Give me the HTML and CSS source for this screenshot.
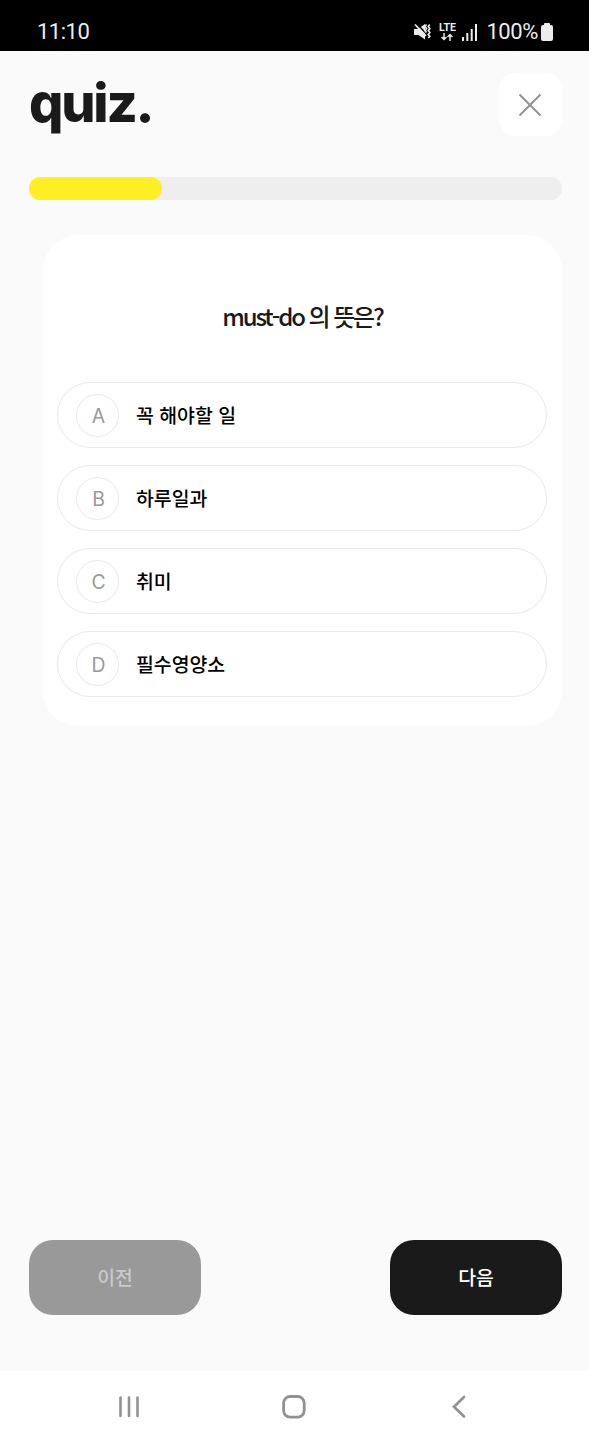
FILE: index.html
```html
<!DOCTYPE html>
<html lang="ko">
<head>
    <meta charset="UTF-8">
    <meta name="viewport" content="width=device-width, initial-scale=1.0">
    <title>quiz.</title>
    <link rel="stylesheet" href="styles.css">
</head>
<body>
    <div class="status-bar">
        <span class="time">11:10</span>
        <div class="status-icons">
            <svg class="mute" width="18" height="18" viewBox="0 0 18 18">
                <path d="M0 6h4L11 1v15.500L4.500 12H0z" fill="#ececec"/>
                <path d="M2 0l12 12.500" stroke="#000" stroke-width="1.500"/>
                <path d="M1 1.500l11 11.500" stroke="#ececec" stroke-width="1.800"/>
                <path d="M12.500 1.500l-1.500 2 1.500 2-1.500 2 1.500 2M15.800 1.500l-1.500 2 1.500 2-1.500 2 1.500 2-1.500 2 1.500 2-1.500 1.500" fill="none" stroke="#ececec" stroke-width="1.700"/>
            </svg>
            <div class="lte">
                <span>LTE</span>
                <svg width="12" height="8" viewBox="0 0 12 8" fill="none" stroke="#ececec" stroke-width="1.500">
                    <path d="M3 0v6.500M.5 4L3 6.500 5.500 4M9 8V1.500M6.500 4L9 1.500 11.500 4"/>
                </svg>
            </div>
            <svg class="signal" width="16" height="17" viewBox="0 0 16 17" fill="#ececec">
                <rect x="0" y="13" width="2" height="4"/>
                <rect x="4.300" y="9" width="2" height="8"/>
                <rect x="8.700" y="5" width="2" height="12"/>
                <rect x="13" y="0" width="2" height="17"/>
            </svg>
            <span class="percent">100%</span>
            <svg class="battery" width="12" height="18" viewBox="0 0 12 18" fill="#ececec">
                <rect x="3" y="0" width="6" height="4" rx="1"/>
                <rect x="0" y="2" width="12" height="16" rx="2"/>
            </svg>
        </div>
    </div>
    <div class="quiz">
        <div class="header">
            <h1>quiz.</h1>
            <button class="close" aria-label="닫기">
                <svg width="24" height="24" viewBox="0 0 24 24">
                    <path d="M1.500 1.500l21 21M22.500 1.500l-21 21" stroke="#929292" stroke-width="2"/>
                </svg>
            </button>
        </div>
        <div class="progress"><div class="progress-now"></div></div>
        <div class="card">
            <p class="question">must-do 의 뜻은?</p>
            <div class="option"><div class="mark">A</div><p>꼭 해야할 일</p></div>
            <div class="option"><div class="mark">B</div><p>하루일과</p></div>
            <div class="option"><div class="mark">C</div><p>취미</p></div>
            <div class="option"><div class="mark">D</div><p>필수영양소</p></div>
        </div>
        <div class="buttons">
            <button class="prev">이전</button>
            <button class="next">다음</button>
        </div>
    </div>
    <div class="nav-bar">
        <svg width="24" height="24" viewBox="0 0 24 24" stroke="#929292" stroke-width="2.600" stroke-linecap="round">
            <path d="M3.500 2.500v18.500M12 2.500v18.500M20.500 2.500v18.500"/>
        </svg>
        <svg width="24" height="24" viewBox="0 0 24 24" fill="none" stroke="#929292" stroke-width="2.800">
            <rect x="1.600" y="1.500" width="20.600" height="20.600" rx="6.500"/>
        </svg>
        <svg width="24" height="24" viewBox="0 0 24 24" fill="none" stroke="#929292" stroke-width="2.700" stroke-linecap="round">
            <path d="M17 2L7 11.700 17 21.500"/>
        </svg>
    </div>
</body>
</html>
```
FILE: styles.css
```css
body, div, p, h1, button{
    margin: 0;
    padding: 0;
}
*{
    box-sizing: border-box;
}
body{
    display: flex;
    flex-direction: column;
    height: 1440px;
    background: #fafafa;
    font-family: "Noto Sans CJK KR", sans-serif;
}
svg{
    display: block;
}
button{
    border: none;
    font-family: inherit;
}
.status-bar{
    display: flex;
    justify-content: space-between;
    height: 51px;
    padding: 20px 36px 0 37px;
    background: #000;
    color: #ececec;
    font-family: Roboto, sans-serif;
    font-size: 22px;
    line-height: 24px;
}
.time{
    letter-spacing: -0.5px;
}
.status-icons{
    display: flex;
}
.mute{
    margin: 3px 6px 0 0;
}
.lte{
    display: flex;
    flex-direction: column;
    align-items: center;
    width: 18px;
    margin-right: 6px;
    font-size: 10.5px;
    font-weight: 700;
    line-height: 10px;
    padding-top: 3px;
}
.signal{
    margin: 4px 8px 0 0;
}
.percent{
    letter-spacing: -0.4px;
}
.battery{
    margin: 3px 0 0 3px;
}
.quiz{
    flex: 1;
    display: flex;
    flex-direction: column;
    padding: 22px 27px 56px 29px;
}
.header{
    display: flex;
    justify-content: space-between;
    height: 63px;
}
h1{
    color: #1a1a1a;
    font-family: Inter, sans-serif;
    font-size: 54px;
    font-weight: 800;
    line-height: 59px;
    letter-spacing: -2.2px;
}
.close{
    display: flex;
    align-items: center;
    justify-content: center;
    width: 63px;
    height: 63px;
    padding-right: 2px;
    background: #fff;
    border-radius: 16px;
}
.progress{
    height: 23px;
    margin-top: 41px;
    background: #eee;
    border-radius: 12px;
}
.progress-now{
    width: 25%;
    height: 100%;
    background: #ffee24;
    border-radius: 12px;
}
.card{
    height: 491px;
    margin: 35px 0 0 14px;
    padding: 63px 15px 0 14px;
    background: #fff;
    border-radius: 35px;
}
.question{
    height: 84px;
    padding-left: 1px;
    color: #1a1a1a;
    font-size: 24px;
    font-weight: 500;
    line-height: 36px;
    letter-spacing: -2.1px;
    text-align: center;
}
.option{
    display: flex;
    align-items: center;
    height: 66px;
    margin-bottom: 17px;
    padding-left: 18px;
    border: 1px solid #e9e9e9;
    border-radius: 33px;
    color: #000;
    font-size: 19.4px;
    font-weight: 500;
    line-height: 28px;
}
.mark{
    width: 43px;
    height: 43px;
    margin-right: 17px;
    padding-left: 2px;
    border: 1px solid #e9e9e9;
    border-radius: 50%;
    color: #999;
    font-family: Inter, sans-serif;
    font-size: 19.4px;
    font-weight: 400;
    line-height: 42px;
    text-align: center;
}
.buttons{
    display: flex;
    justify-content: space-between;
    margin-top: auto;
}
.buttons button{
    width: 172px;
    height: 75px;
    padding-bottom: 3px;
    border-radius: 24px;
    font-size: 19.4px;
    font-weight: 500;
}
.prev{
    background: #999;
    color: #c9c9c9;
}
.buttons .next{
    background: #1a1a1a;
    color: #fff;
}
.nav-bar{
    display: flex;
    justify-content: space-between;
    height: 69px;
    padding: 24px 118px 0 117px;
    background: #fff;
}
```
